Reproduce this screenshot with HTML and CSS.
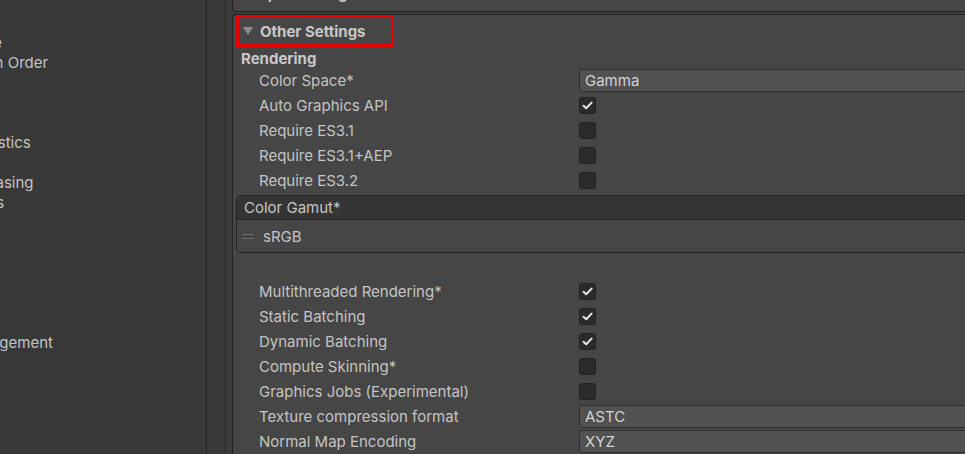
FILE: index.html
```html
<!DOCTYPE html>
<html lang="en">
<head>
<meta charset="utf-8">
<title>Project Settings - Player</title>
<link rel="stylesheet" href="styles.css">
</head>
<body>
<div class="window">
  <aside class="sidebar">
    <ul class="nav">
      <li>Quality</li>
      <li>Scene Template</li>
      <li>Script Execution Order</li>
      <li>Services</li>
      <li class="child">Ads</li>
      <li class="child">Analytics</li>
      <li class="child">Cloud Diagnostics</li>
      <li class="child">Collaborate</li>
      <li class="child">In-App Purchasing</li>
      <li>Tags and Layers</li>
      <li>TextMesh Pro</li>
      <li>Time</li>
      <li>Timeline</li>
      <li>UI Builder</li>
      <li>Version Control</li>
      <li>VFX</li>
      <li>XR Plugin Management</li>
    </ul>
  </aside>
  <div class="gutter"></div>
  <main class="content">
    <section class="panel collapsed">
      <div class="panel-header">
        <span class="tri right"></span><span class="title">Splash Image</span>
      </div>
    </section>
    <section class="panel open">
      <div class="panel-header">
        <div class="highlight"><span class="tri"></span><span class="title">Other Settings</span></div>
      </div>
      <div class="group-title">Rendering</div>
      <div class="row"><span class="label">Color Space*</span><div class="dropdown">Gamma</div></div>
      <div class="row"><span class="label">Auto Graphics API</span><span class="check on"><svg viewBox="0 0 17 17" width="17" height="17"><path d="M4.5 8.8 L7.2 11.3 L12.6 5.6" fill="none" stroke="#e6e6e6" stroke-width="2" stroke-linecap="round" stroke-linejoin="round"/></svg></span></div>
      <div class="row"><span class="label">Require ES3.1</span><span class="check"></span></div>
      <div class="row"><span class="label">Require ES3.1+AEP</span><span class="check"></span></div>
      <div class="row"><span class="label">Require ES3.2</span><span class="check"></span></div>
      <div class="list">
        <div class="list-header">Color Gamut*</div>
        <div class="list-body"><span class="handle"></span><span class="item">sRGB</span></div>
      </div>
      <div class="rows-after">
        <div class="row"><span class="label">Multithreaded Rendering*</span><span class="check on"><svg viewBox="0 0 17 17" width="17" height="17"><path d="M4.5 8.8 L7.2 11.3 L12.6 5.6" fill="none" stroke="#e6e6e6" stroke-width="2" stroke-linecap="round" stroke-linejoin="round"/></svg></span></div>
        <div class="row"><span class="label">Static Batching</span><span class="check on"><svg viewBox="0 0 17 17" width="17" height="17"><path d="M4.5 8.8 L7.2 11.3 L12.6 5.6" fill="none" stroke="#e6e6e6" stroke-width="2" stroke-linecap="round" stroke-linejoin="round"/></svg></span></div>
        <div class="row"><span class="label">Dynamic Batching</span><span class="check on"><svg viewBox="0 0 17 17" width="17" height="17"><path d="M4.5 8.8 L7.2 11.3 L12.6 5.6" fill="none" stroke="#e6e6e6" stroke-width="2" stroke-linecap="round" stroke-linejoin="round"/></svg></span></div>
        <div class="row"><span class="label">Compute Skinning*</span><span class="check"></span></div>
        <div class="row"><span class="label">Graphics Jobs (Experimental)</span><span class="check"></span></div>
        <div class="row"><span class="label">Texture compression format</span><div class="dropdown">ASTC</div></div>
        <div class="row"><span class="label">Normal Map Encoding</span><div class="dropdown">XYZ</div></div>
      </div>
    </section>
  </main>
</div>
</body>
</html>
```

FILE: styles.css
```css
html, body {
  margin: 0;
  padding: 0;
  overflow: hidden;
  width: 965px;
  height: 454px;
}

body {
  background: #383838;
  font-family: Inter, "Noto Sans", sans-serif;
  font-size: 15px;
  color: #c4c4c4;
}

.window {
  display: flex;
  height: 454px;
  width: 1300px;
}

.sidebar {
  flex: none;
  width: 206px;
  border-right: 1px solid #242424;
  background: #383838;
  overflow: hidden;
}

.nav {
  list-style: none;
  margin: 0 0 0 -112px;
  padding: 13px 0 0;
}

.nav li {
  height: 20px;
  line-height: 20px;
  white-space: nowrap;
}

.nav li.child {
  padding-left: 14px;
}

.gutter {
  flex: none;
  width: 18px;
  background: #393939;
  border-right: 1px solid #2b2b2b;
}

.content {
  flex: none;
  width: 1000px;
  padding-left: 6px;
  background: #3c3c3c;
  display: flex;
  flex-direction: column;
}

.panel {
  border: 1px solid #242424;
  border-radius: 4px;
  background: #464646;
}

.panel.collapsed {
  margin-top: -21px;
  margin-bottom: 2px;
}

.panel.open {
  flex: 1;
  border-bottom: none;
  border-bottom-left-radius: 0;
  border-bottom-right-radius: 0;
}

.panel-header {
  height: 31px;
  display: flex;
  align-items: center;
}

.collapsed .panel-header {
  padding-left: 10px;
  padding-bottom: 5px;
  box-sizing: border-box;
}

.open .panel-header {
  height: 32px;
}

.title {
  font-weight: 700;
  color: #c8c8c8;
}

.tri {
  display: inline-block;
  width: 0;
  height: 0;
  border-left: 5.5px solid transparent;
  border-right: 5.5px solid transparent;
  border-top: 8px solid #8b8b8b;
  margin-right: 7px;
}

.tri.right {
  border-top: 5.5px solid transparent;
  border-bottom: 5.5px solid transparent;
  border-left: 8px solid #8b8b8b;
  border-right: none;
}

.highlight {
  box-sizing: border-box;
  height: 32px;
  width: 158px;
  margin-left: 3px;
  border: 3px solid #e60000;
  display: flex;
  align-items: center;
  padding-left: 4px;
}

.group-title {
  height: 21px;
  line-height: 24px;
  padding-left: 8px;
  font-weight: 700;
  color: #c8c8c8;
}

.row {
  height: 25px;
  display: grid;
  grid-template-columns: 346px 1fr;
  align-items: center;
}

.label {
  padding-left: 26px;
  white-space: nowrap;
}

.dropdown {
  box-sizing: border-box;
  height: 23px;
  line-height: 21px;
  border: 1px solid #303030;
  border-radius: 3px;
  background: #515151;
  padding-left: 5px;
  color: #d2d2d2;
}

.check {
  box-sizing: border-box;
  width: 17px;
  height: 17px;
  border: 1px solid #232323;
  border-radius: 3px;
  background: #2b2b2b;
  display: block;
}

.check svg {
  display: block;
  margin: -1px 0 0 -1px;
}

.list {
  margin: 2px 0 0 3px;
  border: 1px solid #242424;
  border-radius: 4px;
  overflow: hidden;
}

.list-header {
  height: 23px;
  line-height: 23px;
  background: #353535;
  border-bottom: 1px solid #242424;
  padding-left: 7px;
}

.list-body {
  height: 32px;
  display: flex;
  align-items: center;
  padding-left: 5px;
  background: #464646;
}

.handle {
  width: 12px;
  height: 3px;
  border-top: 1px solid #6e6e6e;
  border-bottom: 1px solid #6e6e6e;
  margin-right: 9px;
}

.item {
  color: #c4c4c4;
}

.rows-after {
  padding-top: 26px;
}
```
